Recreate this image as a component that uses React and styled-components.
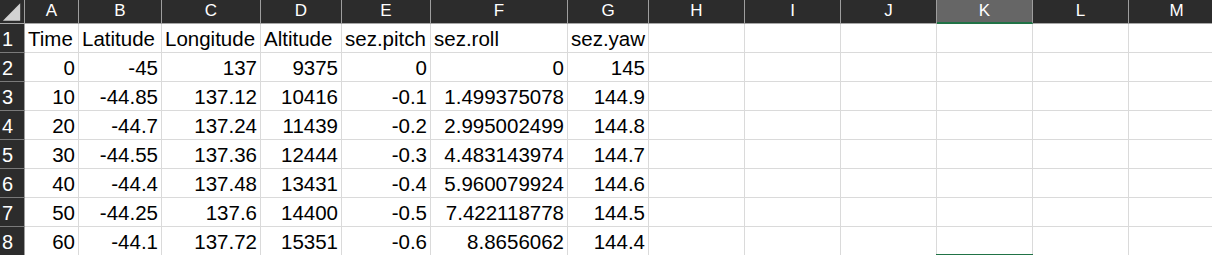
import React from 'react'
import styled, { createGlobalStyle } from 'styled-components'

const GlobalStyle = createGlobalStyle`
  html, body {
    margin: 0;
    padding: 0;
    background: #ffffff;
    overflow: hidden;
  }
`

const columns = [
  { key: 'A', width: 54 },
  { key: 'B', width: 83 },
  { key: 'C', width: 99 },
  { key: 'D', width: 81 },
  { key: 'E', width: 89 },
  { key: 'F', width: 137 },
  { key: 'G', width: 81 },
  { key: 'H', width: 96 },
  { key: 'I', width: 96 },
  { key: 'J', width: 96 },
  { key: 'K', width: 96 },
  { key: 'L', width: 96 },
  { key: 'M', width: 96 },
]

const titles = ['Time', 'Latitude', 'Longitude', 'Altitude', 'sez.pitch', 'sez.roll', 'sez.yaw']

const data = [
  ['0', '-45', '137', '9375', '0', '0', '145'],
  ['10', '-44.85', '137.12', '10416', '-0.1', '1.499375078', '144.9'],
  ['20', '-44.7', '137.24', '11439', '-0.2', '2.995002499', '144.8'],
  ['30', '-44.55', '137.36', '12444', '-0.3', '4.483143974', '144.7'],
  ['40', '-44.4', '137.48', '13431', '-0.4', '5.960079924', '144.6'],
  ['50', '-44.25', '137.6', '14400', '-0.5', '7.422118778', '144.5'],
  ['60', '-44.1', '137.72', '15351', '-0.6', '8.8656062', '144.4'],
]

const selectedCol = 'K'

const App = () => {
  const rows = [titles, ...data]
  return (
    <>
      <GlobalStyle />
      <Sheet>
        <Corner>
          <svg width="25" height="24" viewBox="0 0 25 24">
            <polygon points="3,21 21,21 21,3" fill="#d2d2d2" />
          </svg>
        </Corner>
        {columns.map(c => (
          <ColHead key={c.key} $selected={c.key === selectedCol}>{c.key}</ColHead>
        ))}

        {rows.map((row, r) => (
          <React.Fragment key={r}>
            <RowHead>{r + 1}</RowHead>
            {columns.map((c, i) => (
              <Cell
                key={c.key}
                $align={r > 0 ? 'right' : 'left'}
                $selectBelow={r === rows.length - 1 && c.key === selectedCol}
              >
                {row[i]}
              </Cell>
            ))}
          </React.Fragment>
        ))}
      </Sheet>
    </>
  )
}

const Sheet = styled.div`
  display: grid;
  grid-template-columns: 25px ${columns.map(c => c.width + 'px').join(' ')};
  grid-template-rows: 24px repeat(8, 29px);
  width: 1212px;
  height: 255px;
  overflow: hidden;
  font-family: "Liberation Sans", Arial, sans-serif;
  color: #000000;
`

const Corner = styled.div`
  background: #2c2c2c;
  border-right: 1px solid #9e9e9e;
  border-bottom: 1px solid #a8a8a8;
  box-sizing: border-box;
  display: flex;

  svg {
    display: block;
  }
`

const ColHead = styled.div`
  box-sizing: border-box;
  background: ${p => (p.$selected ? '#666666' : '#2c2c2c')};
  color: #ffffff;
  font-size: 17px;
  line-height: 22px;
  text-align: center;
  border-right: 1px solid #9e9e9e;
  border-bottom: ${p => (p.$selected ? '2px solid #217346' : '1px solid #a8a8a8')};
`

const RowHead = styled.div`
  box-sizing: border-box;
  background: #2c2c2c;
  color: #ffffff;
  font-size: 20px;
  border-right: 1px solid #9e9e9e;
  border-bottom: 1px solid #7a7a7a;
  padding-left: 2px;
  display: flex;
  align-items: flex-end;
  padding-bottom: 2px;
  line-height: 22px;
`

const Cell = styled.div`
  position: relative;
  box-sizing: border-box;
  border-right: 1px solid #dadada;
  border-bottom: 1px solid #dadada;
  font-size: 20.5px;
  line-height: 22px;
  display: flex;
  align-items: flex-end;
  justify-content: ${p => (p.$align === 'right' ? 'flex-end' : 'flex-start')};
  padding: 0 3px 2px 3px;
  white-space: nowrap;

  ${p =>
    p.$selectBelow &&
    `
    &::after {
      content: '';
      position: absolute;
      left: -1px;
      right: -1px;
      bottom: -1px;
      height: 2px;
      background: #217346;
    }
  `}
`

export default App
